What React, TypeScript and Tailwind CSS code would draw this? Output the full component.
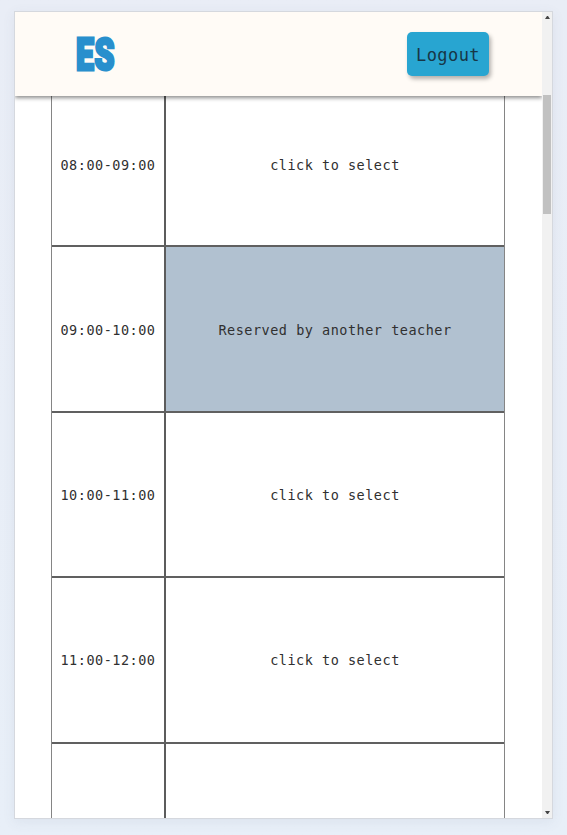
const slots = [
  { time: "08:00-09:00", label: "click to select", reserved: false, size: "h-[165px]", inset: "pt-[3px]" },
  { time: "09:00-10:00", label: "Reserved by another teacher", reserved: true, size: "h-[166px]", inset: "pt-[3px]" },
  { time: "10:00-11:00", label: "click to select", reserved: false, size: "h-[165px]", inset: "pt-px" },
  { time: "11:00-12:00", label: "click to select", reserved: false, size: "h-[166px]", inset: "pt-px" },
  { time: "", label: "", reserved: false, size: "h-[165px]", inset: "pt-px" },
];

function Header() {
  return (
    <header className="relative z-10 flex h-[84px] shrink-0 items-center justify-between bg-[#fffbf6] pr-[53px] pl-[61px] shadow-[0_2px_4px_rgba(0,0,0,0.45)]">
      <div className="flex h-12 w-14 items-center pt-px">
        <span className="origin-left scale-x-[0.71] font-['Roboto','Liberation_Sans',sans-serif] text-[45px] leading-none font-black tracking-[1px] text-[#288fcd] [-webkit-text-stroke:3px_#288fcd]">
          ES
        </span>
      </div>
      <button className="flex h-11 w-[82px] items-center justify-center rounded-[5px] bg-[#28a5d1] pt-[3px] font-['DejaVu_Sans_Mono',monospace] text-[17px] tracking-[0.4px] text-[#173747] shadow-[2px_3px_4px_rgba(0,0,0,0.3)]">
        Logout
      </button>
    </header>
  );
}

function Schedule() {
  return (
    <main className="-mt-[14px] ml-9 w-[454px] border-x border-[#858585] font-['DejaVu_Sans_Mono',monospace] text-[13.5px] tracking-[0.51px] text-[#303030]">
      {slots.map((slot, index) => (
        <div key={index} className={`flex border-b-2 border-[#606060] ${slot.size}`}>
          <div className={`flex w-[114px] shrink-0 items-center justify-center border-r-2 border-[#5c5c5c] ${slot.inset}`}>
            {slot.time}
          </div>
          <div className={`flex flex-1 items-center justify-center ${slot.inset} ${slot.reserved ? "bg-[#b1c1d0]" : "bg-white"}`}>
            {slot.label}
          </div>
        </div>
      ))}
    </main>
  );
}

function Scrollbar() {
  return (
    <div className="flex w-[10px] shrink-0 flex-col items-center bg-[#f1f1f1]">
      <svg className="mt-1 h-[3px] w-[5px]" viewBox="0 0 5 3">
        <path d="M0 3 2 0h1l2 3z" fill="#444" />
      </svg>
      <div className="mt-[76px] h-[119px] w-2 bg-[#c1c1c1]" />
      <svg className="mt-auto mb-1 h-[3px] w-[5px]" viewBox="0 0 5 3">
        <path d="M0 0 2 3h1l2-3z" fill="#444" />
      </svg>
    </div>
  );
}

export default function App() {
  return (
    <div className="h-[835px] w-[567px] overflow-hidden bg-linear-to-b from-[#e9edf6] to-[#e8eff8] pt-[11px] pl-[14px]">
      <div className="flex h-[808px] w-[539px] overflow-hidden border border-[#d5d8de] bg-white shadow-[0_3px_12px_rgba(80,90,120,0.08)]">
        <div className="flex min-w-0 flex-1 flex-col overflow-hidden">
          <Header />
          <Schedule />
        </div>
        <Scrollbar />
      </div>
    </div>
  );
}
